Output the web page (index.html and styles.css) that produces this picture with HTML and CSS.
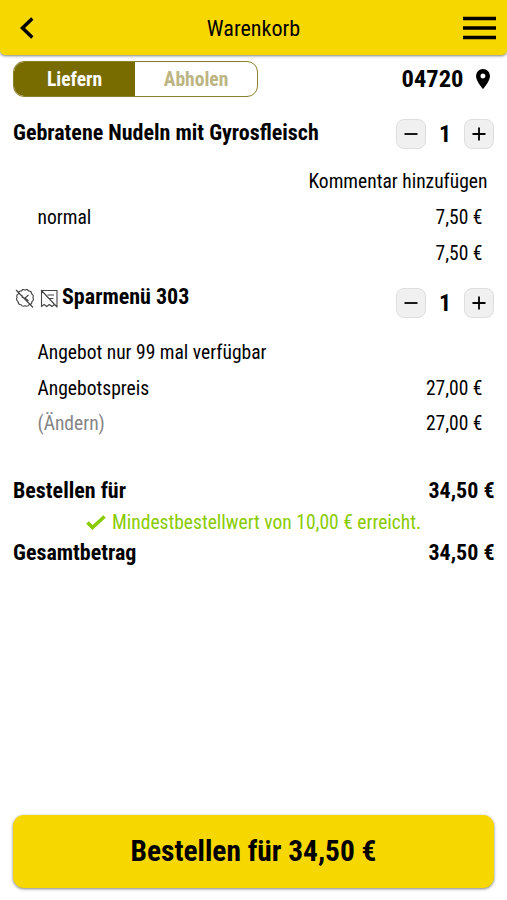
FILE: index.html
```html
<!DOCTYPE html>
<html lang="de">
<head>
<meta charset="utf-8">
<title>Warenkorb</title>
<link rel="stylesheet" href="styles.css">
</head>
<body>
<header class="bar">
  <svg class="back" viewBox="0 0 14 22"><path d="M12.3 1.5 2.5 11l9.8 9.5"/></svg>
  <h1>Warenkorb</h1>
  <svg class="menu" viewBox="0 0 33 24"><path d="M0 2.5h33M0 12h33M0 21.5h33"/></svg>
</header>
<main>
  <div class="mode">
    <div class="toggle"><span class="on">Liefern</span><span class="off">Abholen</span></div>
    <div class="zip"><span>04720</span><svg class="pin" viewBox="0 0 14 20"><path fill-rule="evenodd" d="M7 0a7 7 0 0 1 7 7c0 5.2-7 13-7 13S0 12.200 0 7a7 7 0 0 1 7-7Zm0 4.500a2.500 2.500 0 1 0 0 5 2.500 2.500 0 0 0 0-5Z"/></svg></div>
  </div>
  <section class="item">
    <div class="head">
      <h2>Gebratene Nudeln mit Gyrosfleisch</h2>
      <div class="stepper"><button><svg viewBox="0 0 14 14"><path d="M0.500 7h13"/></svg></button><b>1</b><button><svg viewBox="0 0 14 14"><path d="M0.500 7h13M7 .5v13"/></svg></button></div>
    </div>
    <div class="line comment"><span>Kommentar hinzufügen</span></div>
    <div class="line"><span>normal</span><span>7,50 €</span></div>
    <div class="line end"><span>7,50 €</span></div>
  </section>
  <section class="item second">
    <div class="head">
      <div class="named">
        <svg class="flag" viewBox="0 0 20 20"><path d="M10 2Q12.300.7 13.500 3 16.500 2.700 16.500 5.700 19 7 17.900 9.500 19.300 12 17 13.500 17 16.500 14 16.700 12.500 19 10 17.800 7.500 19 6 16.700 3 16.500 3 13.500.7 12 2.100 9.500 1 7 3.500 5.700 3.500 2.700 6.500 3 7.700.7 10 2ZM7 7l.5 3M13.500 7l-3.500 3 3.500 3M1 2l17 17.500"/></svg>
        <svg class="flag" viewBox="0 0 20 20"><path d="M2.500 2.500h15.500v16l-2.500-2-2.500 2-2.700-2-2.600 2-2.600-2-2.600 2zM8.500 7h6.500M10.500 10.500h4M2 2l16 17"/></svg>
        <h2>Sparmenü 303</h2>
      </div>
      <div class="stepper"><button><svg viewBox="0 0 14 14"><path d="M0.500 7h13"/></svg></button><b>1</b><button><svg viewBox="0 0 14 14"><path d="M0.500 7h13M7 .5v13"/></svg></button></div>
    </div>
    <div class="line offer"><span>Angebot nur 99 mal verfügbar</span></div>
    <div class="line"><span>Angebotspreis</span><span>27,00 €</span></div>
    <div class="line"><span class="muted">(Ändern)</span><span>27,00 €</span></div>
  </section>
  <section class="sums">
    <div class="sum"><span>Bestellen für</span><span>34,50 €</span></div>
    <div class="minimum"><svg viewBox="0 0 20 15"><path d="m1.500 7.500 5 5L18.500 1.500"/></svg><span>Mindestbestellwert von 10,00 € erreicht.</span></div>
    <div class="sum"><span>Gesamtbetrag</span><span>34,50 €</span></div>
  </section>
</main>
<footer><button class="order">Bestellen für 34,50 €</button></footer>
</body>
</html>
```
FILE: styles.css
```css
* { box-sizing: border-box; }
body {
  margin: 0;
  height: 900px;
  display: flex;
  flex-direction: column;
  background: #fff;
  color: #000;
  font-family: "Roboto Condensed", Roboto, sans-serif;
  font-stretch: 75%;
  font-size: 19.55px;
  line-height: 1;
  white-space: nowrap;
}
h1, h2 { margin: 0; }
svg { display: block; fill: none; stroke: currentColor; flex: none; }
button { font: inherit; color: inherit; padding: 0; }
.bar {
  height: 55px;
  padding: 1px 11px 0;
  display: grid;
  grid-template-columns: 1fr auto 1fr;
  align-items: center;
  background: #f6d800;
  border-radius: 0 0 5px 5px;
  box-shadow: 0 1px 3px rgba(0, 0, 0, .5);
}
.bar h1 { font-size: 22.1px; font-weight: 400; }
.back { width: 14px; height: 22px; margin-left: 9px; stroke-width: 3.5; }
.menu { width: 33px; height: 24px; stroke-width: 3.4; justify-self: end; }
main { flex: 1; padding: 6px 12.5px 0 13px; }
.mode { height: 36px; display: flex; justify-content: space-between; align-items: center; }
.toggle {
  width: 245px;
  height: 36px;
  display: flex;
  border: 1px solid #8c812d;
  border-radius: 11px;
  overflow: hidden;
  font-weight: 700;
}
.toggle span { flex: 1; display: grid; place-items: center; padding-top: 2px; }
.toggle .on { flex: none; width: 121px; }
.on { background: #786b00; color: #fff; }
.off { color: #bcb583; }
.zip { display: flex; align-items: center; gap: 12px; padding-right: 5px; font-size: 24.5px; font-weight: 700; }
.pin { width: 14px; height: 20px; margin-top: -1px; fill: currentColor; stroke: none; }
.head { display: flex; justify-content: space-between; height: 30px; align-items: center; }
.item .head { margin-top: 22px; }
h2, .sum { font-size: 22px; font-weight: 700; }
h2 { margin-top: -2px; }
.stepper { display: flex; justify-content: space-between; align-items: center; width: 99px; font-size: 24px; }
.stepper button {
  width: 30px;
  height: 30px;
  display: grid;
  place-items: center;
  background: #f0f0f0;
  border: 1px solid #dedede;
  border-radius: 8px;
}
.stepper svg { width: 14px; height: 14px; stroke-width: 1.8; }
.line { height: 35.5px; padding: 2px 12px 0 24.5px; display: flex; align-items: center; justify-content: space-between; }
.comment { margin-top: 14px; height: 36.5px; padding-right: 7px; justify-content: flex-end; }
.end { justify-content: flex-end; }
.second .head { margin-top: 17px; }
.named { display: flex; align-items: center; margin-top: -11px; }
.named h2 { margin: 0; }
.flag { width: 20px; height: 20px; margin: 1px 4px 0 0; color: #444; stroke-width: 1.1; }
.flag:first-child { margin-left: 2px; }
.flag + h2 { margin-left: -1px; }
.offer { margin-top: 17px; }
.muted { color: #858585; }
.sums { margin-top: 34px; }
.sum { height: 32px; display: flex; align-items: center; justify-content: space-between; }
.minimum { height: 30px; padding: 1px 0 0 73px; display: flex; align-items: center; gap: 6px; color: #8c0; }
.minimum svg { width: 20px; height: 15px; stroke-width: 3.6; }
footer { padding: 0 13px 12px; }
.order {
  display: block;
  width: 100%;
  height: 73px;
  border: 0;
  border-radius: 11px;
  background: #f6d800;
  box-shadow: 0 1px 3px rgba(0, 0, 0, .5);
  font-size: 29.4px;
  font-weight: 700;
}
```
